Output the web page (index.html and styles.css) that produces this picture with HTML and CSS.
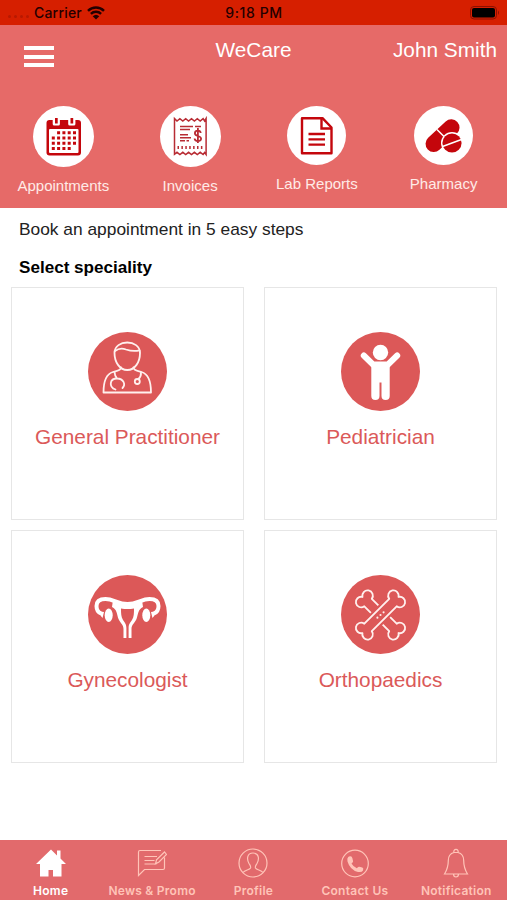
FILE: index.html
```html
<!DOCTYPE html>
<html lang="en">
<head>
    <meta charset="UTF-8">
    <meta name="viewport" content="width=device-width, initial-scale=1.0">
    <title>WeCare</title>
    <link rel="stylesheet" href="styles.css">
</head>
<body>
    <div class="status-bar">
        <div class="status-left">
            <span class="signal"><i></i><i></i><i></i><i></i></span>
            <span class="carrier">Carrier</span>
            <svg class="wifi" viewBox="0 0 18 14">
                <path d="M1 4.8a11.6 11.6 0 0 1 16 0M3.9 7.9a7.4 7.4 0 0 1 10.2 0" fill="none" stroke="#240000" stroke-width="2.5"/>
                <path d="M9 13.6L5.7 10.3a4.8 4.8 0 0 1 6.6 0z" fill="#240000"/>
            </svg>
        </div>
        <div class="status-time">9:18 PM</div>
        <div class="status-right">
            <svg class="battery" viewBox="0 0 30 14">
                <rect x="0.5" y="0.5" width="26" height="12.5" rx="3.5" fill="none" stroke="#8d1000"/>
                <rect x="2" y="2" width="23" height="9.5" rx="2" fill="#000"/>
                <path d="M28 4.5q2 2.2 0 4.5z" fill="#8d1000"/>
            </svg>
        </div>
    </div>

    <div class="header">
        <div class="title-row">
            <button class="menu-button"><span></span><span></span><span></span></button>
            <div class="app-name">WeCare</div>
            <div class="user-name">John Smith</div>
        </div>
        <div class="shortcuts">
            <div class="shortcut">
                <svg class="shortcut-icon large" viewBox="0 0 61 61">
                    <circle cx="30.5" cy="30.5" r="30.5" fill="#fff"/>
                    <rect x="13.5" y="14" width="34.5" height="35.5" rx="3" fill="#c4060c"/>
                    <rect x="16" y="23" width="29.5" height="24" rx="1" fill="#fff"/>
                    <path d="M19.7 12h7.200v6a1.500 1.500 0 0 1-1.500 1.500h-4.200a1.500 1.500 0 0 1-1.500-1.500zM35.200 12h7.200v6a1.500 1.500 0 0 1-1.500 1.500h-4.200a1.500 1.500 0 0 1-1.500-1.500z" fill="#fff"/>
                    <path d="M22 12h2.700v5.500H22zM37.500 12h2.700v5.500h-2.700z" fill="#c4060c"/>
                    <path d="M24.100 26.700H43M18.800 32H43M18.800 37.300H43M18.800 42.600H38" stroke="#c4060c" stroke-width="3" stroke-dasharray="3 2.300"/>
                </svg>
                <span>Appointments</span>
            </div>
            <div class="shortcut">
                <svg class="shortcut-icon large" viewBox="0 0 61 61">
                    <circle cx="30.5" cy="30.5" r="30.5" fill="#fff"/>
                    <path d="M14.500 12.500l2.500 2.500 2.900-2.300 2.900 2.300 2.900-2.300 2.900 2.300 2.900-2.300 2.900 2.300 2.900-2.300 2.900 2.300 2.900-2.300 1.500 2.300 1.500-2.500v36l-1.500-2-1.500 2-2.900-2.200-2.900 2.200-2.900-2.200-2.900 2.200-2.900-2.200-2.900 2.200-2.900-2.200-2.900 2.200-2.900-2.200-2.500 2z" fill="none" stroke="#b82c34" stroke-width="1.5"/>
                    <path d="M20 20.500h13M35 20.500h6M20 23.500h10M20 28.800h8M20 31.800h11M20 34.800h5M26.500 34.800h2.500" stroke="#b82c34" stroke-width="1.6"/>
                    <path d="M17.500 41.500h27" stroke="#b82c34" stroke-width="3" stroke-dasharray="1.5 2.4"/>
                    <path d="M40.700 27c-.4-3.300-5.800-3-5.800.2 0 3.600 6.200 2 6.200 5.500 0 3.300-6.300 3.300-6.500-.2M37.900 22v15" fill="none" stroke="#b82c34" stroke-width="1.8"/>
                </svg>
                <span>Invoices</span>
            </div>
            <div class="shortcut">
                <svg class="shortcut-icon" viewBox="0 0 59 59">
                    <circle cx="29.5" cy="29.5" r="29.5" fill="#fff"/>
                    <path d="M15 12.200h20.500l9 9.300v25.700H15z" fill="none" stroke="#c4060c" stroke-width="2.4" stroke-linejoin="round"/>
                    <path d="M34.500 12.500v10h10" fill="none" stroke="#c4060c" stroke-width="2.4"/>
                    <path d="M21.500 28h16.500M21.500 33.300h16.500M21.500 38.700h16.500" stroke="#c4060c" stroke-width="2.3"/>
                </svg>
                <span>Lab Reports</span>
            </div>
            <div class="shortcut">
                <svg class="shortcut-icon" viewBox="0 0 59 59">
                    <circle cx="29.5" cy="29.5" r="29.5" fill="#fff"/>
                    <path d="M19.800 37.800L37.300 21.500" stroke="#c4060c" stroke-width="16.5" stroke-linecap="round"/>
                    <path d="M23 23.500l10 10" stroke="#fff" stroke-width="1.5"/>
                    <circle cx="38" cy="37" r="11" fill="#fff"/>
                    <circle cx="38" cy="37" r="9.6" fill="#c4060c"/>
                    <path d="M28.500 40.500l19-7" stroke="#fff" stroke-width="1.6"/>
                </svg>
                <span>Pharmacy</span>
            </div>
        </div>
    </div>

    <div class="content">
        <p class="intro">Book an appointment in 5 easy steps</p>
        <h2 class="section-title">Select speciality</h2>
        <div class="speciality-grid">
            <div class="card">
                <svg class="card-icon" viewBox="0 0 79 79">
                    <circle cx="39.5" cy="39.5" r="39.5" fill="#dc5858"/>
                    <g fill="none" stroke="#fff0ee" stroke-width="1.8" stroke-linejoin="round" stroke-linecap="round">
                        <path d="M26.500 21c0-14 25.500-14 25.500 0 0 9-5 17-12.700 17S26.500 30 26.500 21z"/>
                        <path d="M27 19c4-3 7-3 11-1.500 5 1.700 9 2 13.500.8"/>
                        <path d="M33 35.500c0 3-4 3.500-8 4.500-7 2-9.500 9-9.500 20.500H63c0-11.500-2.500-18.500-9.500-20.500-4-1-8-1.500-8-4.500"/>
                        <path d="M26.500 40c.2 3 .5 4.500 2.500 6.500M27.500 57.500c-7-2.500-6-11 1.500-11 6.500 0 9 6 5.500 9.500M53 40.500c.2 4-.8 5-2.500 6.500"/>
                        <circle cx="49.3" cy="49.5" r="2.5"/>
                    </g>
                </svg>
                <div class="card-title">General Practitioner</div>
            </div>
            <div class="card">
                <svg class="card-icon" viewBox="0 0 79 79">
                    <circle cx="39.5" cy="39.5" r="39.5" fill="#dc5858"/>
                    <circle cx="39.5" cy="20.5" r="7.7" fill="#fff"/>
                    <path d="M22.800 23.500L32 32.500h15l9.200-9" fill="none" stroke="#fff" stroke-width="6" stroke-linecap="round" stroke-linejoin="round"/>
                    <path d="M30.300 31h18.400v33a4.100 4.100 0 0 1-8.200 0V50.500h-2V64a4.100 4.100 0 0 1-8.200 0z" fill="#fff"/>
                </svg>
                <div class="card-title">Pediatrician</div>
            </div>
            <div class="card">
                <svg class="card-icon" viewBox="0 0 79 79">
                    <circle cx="39.5" cy="39.5" r="39.5" fill="#dc5858"/>
                    <path d="M13 38.500c-3-1.200-4.500-4-4.500-7.500 0-5 4-7 9-7 8 0 12.300 5 22 5s14-5 22-5c5 0 9 2 9 7 0 3.500-1.500 6.300-4.500 7.500" fill="none" stroke="#fff" stroke-width="4"/>
                    <path d="M25 25c6 4 23 4 29 0l1 7c-5 2-5 8-6.500 12-2 4.500-5 5.500-5 10v9h-8v-9c0-4.500-3-5.500-5-10-1.500-4-1.500-10-6.500-12z" fill="#fff"/>
                    <path d="M33 33.500q6.500 1 13 0c0 4.500 0 8.500-2 11.500s-3.300 4-3.400 8v10.500h-2.200V53c-.1-4-1.400-5-3.400-8s-2-7-2-11.500z" fill="#dc5858"/>
                    <path d="M9 36l5.500 7 1.500-6zM70 36l-5.500 7-1.500-6z" fill="#fff"/>
                    <ellipse cx="20.7" cy="40.2" rx="4" ry="6.8" fill="#fff"/>
                    <ellipse cx="58.3" cy="40.2" rx="4" ry="6.8" fill="#fff"/>
                </svg>
                <div class="card-title">Gynecologist</div>
            </div>
            <div class="card">
                <svg class="card-icon" viewBox="0 0 79 79">
                    <circle cx="39.5" cy="39.5" r="39.5" fill="#dc5858"/>
                    <defs>
                        <path id="bone" d="M-20-6H20A6 6 0 1 1 29 0A6 6 0 1 1 20 6H-20A6 6 0 1 1-29 0A6 6 0 1 1-20-6z"/>
                    </defs>
                    <g transform="translate(39.5 40) scale(0.88)" stroke-linejoin="round">
                        <use href="#bone" transform="rotate(45)" fill="none" stroke="#fff0ee" stroke-width="2.1"/>
                        <path d="M-12 12L12-12" stroke="#dc5858" stroke-width="19"/>
                        <use href="#bone" transform="rotate(-45)" fill="#dc5858" stroke="#fff0ee" stroke-width="2.1"/>
                        <g fill="#fff0ee">
                            <circle cx="-3.5" cy="3" r="1.2"/>
                            <circle cx="0" cy="0" r="1.2"/>
                            <circle cx="3.5" cy="-3" r="1.2"/>
                        </g>
                    </g>
                </svg>
                <div class="card-title">Orthopaedics</div>
            </div>
        </div>
    </div>

    <div class="tab-bar">
        <div class="tab active">
            <svg class="tab-icon" viewBox="0 0 30 30">
                <path d="M15 1.500L0 16h4v12.500h8.500V22h4.500v6.500h8.500V16H30l-5.500-5.500V2.500h-3.500v5z" fill="#fff"/>
            </svg>
            <span>Home</span>
        </div>
        <div class="tab">
            <svg class="tab-icon" viewBox="0 0 30 30">
                <path d="M24 2.500H3q-1.500 0-1.500 1.500v23.500l6-6H26q1.500 0 1.500-1.500V9.500M7.500 8.500H20M7.500 12.500h10M7.500 16h12M18.500 15.800l1-4 8-7.800 2 2.500-7.500 7.500z"/>
            </svg>
            <span>News &amp; Promo</span>
        </div>
        <div class="tab">
            <svg class="tab-icon" viewBox="0 0 30 30">
                <circle cx="15" cy="15" r="14"/>
                <path d="M5 24.500c2-2.500 6.500-2.500 7.500-4.500.7-1.500-.5-3-1.500-4.500C8.500 11 9 5 15 5s6.500 6 4 10.500c-1 1.500-2.200 3-1.500 4.500 1 2 5.500 2 7.500 4.500"/>
            </svg>
            <span>Profile</span>
        </div>
        <div class="tab">
            <svg class="tab-icon" viewBox="0 0 30 30">
                <circle cx="15" cy="15.5" r="13.3"/>
                <path d="M7.500 10.200q.8-2.200 3-1.900 1.500.2 1.900 2l.7 3q.2 1-1.600 2.200 2 3.500 5.300 4.800 1.300-1.900 2.400-1.600l3.100.8q1.600.6.700 2.900-1.200 2.300-5 1.500-8-2-10.500-10.500-.3-1.700 0-3.200z" fill="#ffc4b8" stroke="none"/>
            </svg>
            <span>Contact Us</span>
        </div>
        <div class="tab">
            <svg class="tab-icon" viewBox="0 0 30 30">
                <path d="M13 4.500a2.200 2.200 0 1 1 4 0c4 1 5.700 4 5.700 8 0 7 1.300 9.500 3.800 13.500h-23c2.500-4 3.800-6.500 3.800-13.500 0-4 1.700-7 5.700-8zM12.500 26a2.500 3 0 0 0 5 0M13 4.500h4"/>
            </svg>
            <span>Notification</span>
        </div>
    </div>
</body>
</html>
```
FILE: styles.css
```css
* {
    margin: 0;
    padding: 0;
    box-sizing: border-box;
}

body {
    font-family: "Liberation Sans", Arial, sans-serif;
    background: #fff;
    height: 100vh;
    display: flex;
    flex-direction: column;
    overflow: hidden;
}

.status-bar {
    height: 25px;
    background: #d61f00;
    color: #240000;
    display: grid;
    grid-template-columns: 1fr auto 1fr;
    align-items: center;
    padding: 0 7px 0 8px;
    font-family: Inter, sans-serif;
    font-size: 14px;
    font-weight: 500;
}

.status-left {
    display: flex;
    align-items: center;
}

.status-time {
    letter-spacing: 0.6px;
}

.carrier {
    letter-spacing: 0.2px;
}

.signal {
    display: flex;
    gap: 3px;
    width: 26px;
    padding-top: 8px;
}

.signal i {
    width: 3px;
    height: 3px;
    border-radius: 50%;
    background: #b81900;
}

.wifi {
    width: 18px;
    height: 14px;
    margin-left: 5px;
}

.status-right {
    display: flex;
    justify-content: flex-end;
}

.battery {
    width: 30px;
    height: 14px;
}

.header {
    height: 183px;
    background: #e66a68;
    color: #fff;
}

.title-row {
    height: 81px;
    display: grid;
    grid-template-columns: 1fr auto 1fr;
    padding: 14px 10px 0 24px;
    font-size: 20.8px;
    line-height: 22px;
}

.app-name {
    padding-right: 14px;
}

.menu-button {
    width: 30px;
    height: 21px;
    margin-top: 7px;
    border: none;
    background: none;
    display: flex;
    flex-direction: column;
    justify-content: space-between;
}

.menu-button span {
    width: 30px;
    height: 4px;
    background: #fff;
}

.user-name {
    text-align: right;
}

.shortcuts {
    display: grid;
    grid-template-columns: repeat(4, 1fr);
}

.shortcut {
    display: flex;
    flex-direction: column;
    align-items: center;
    gap: 10px;
    font-size: 15px;
    line-height: 18px;
    color: #ffebe7;
}

.shortcut-icon {
    width: 59px;
    height: 59px;
}

.shortcut-icon.large {
    width: 61px;
    height: 61px;
}

.content {
    flex: 1;
    padding: 11px 10px 0 11px;
}

.intro {
    padding-left: 8px;
    font-size: 17.35px;
    line-height: 20px;
    color: #222;
}

.section-title {
    padding: 19px 0 9px 8px;
    font-size: 17.1px;
    line-height: 20px;
    color: #000;
}

.speciality-grid {
    display: grid;
    grid-template-columns: 1fr 1fr;
    gap: 10px 20px;
}

.card {
    height: 233px;
    border: 1px solid #e6e6e6;
    padding-top: 44px;
    display: flex;
    flex-direction: column;
    align-items: center;
}

.card-icon {
    width: 79px;
    height: 79px;
}

.card-title {
    margin-top: 14px;
    font-size: 20.8px;
    line-height: 24px;
    color: #db5959;
}

.tab-bar {
    height: 60px;
    background: #e26a6c;
    display: grid;
    grid-template-columns: repeat(5, 1fr);
}

.tab {
    padding-top: 8px;
    display: flex;
    flex-direction: column;
    align-items: center;
    font-family: Inter, sans-serif;
    font-size: 12px;
    font-weight: 600;
    line-height: 16px;
    letter-spacing: 0.25px;
    color: #ffc4b8;
}

.tab.active {
    color: #fff;
}

.tab-icon {
    width: 30px;
    height: 30px;
    margin-bottom: 5px;
    fill: none;
    stroke: #ffc4b8;
    stroke-width: 1.2;
}

.tab.active .tab-icon {
    stroke: none;
}
```
